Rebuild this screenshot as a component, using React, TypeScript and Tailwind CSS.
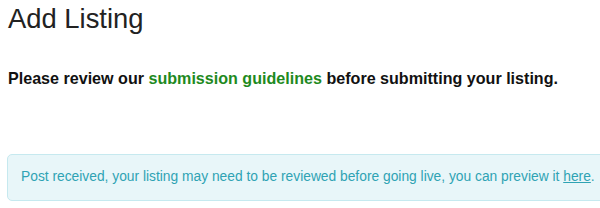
import React from "react";

export default function App() {
  return (
    <div className="w-[600px] h-[208px] overflow-hidden bg-white" style={{ fontFamily: '"Liberation Sans", Arial, sans-serif' }}>
      <h1 className="pl-2 pt-[3px] text-[27.4px] leading-[32px] text-[#222] font-normal">Add Listing</h1>
      <p className="pl-2 mt-[33px] text-[16.1px] leading-[20px] font-bold text-[#111]">
        Please review our <a className="text-[#1e8a1e]">submission guidelines</a> before submitting your listing.
      </p>
      <div className="ml-[7px] mt-[66px] w-[620px] h-[47px] flex items-center pl-[13px] rounded-[5px] border border-[#c6e9ef] bg-[#e8f6f9] text-[13.8px] text-[#2fa3b4]">
        <span>
          Post received, your listing may need to be reviewed before going live, you can preview it <a className="underline">here</a>.
        </span>
      </div>
    </div>
  );
}
